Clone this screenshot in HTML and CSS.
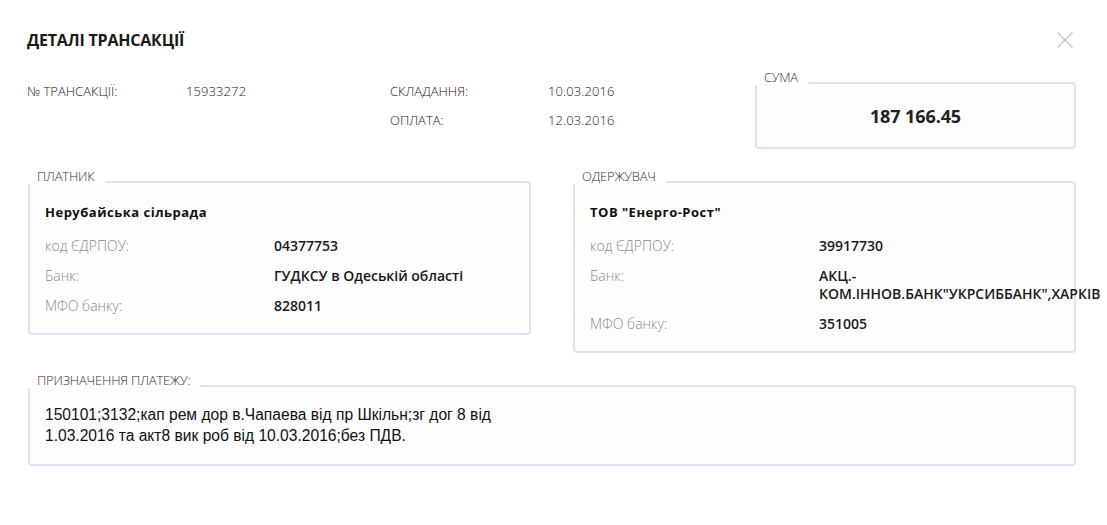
FILE: index.html
```html
<!DOCTYPE html>
<html lang="uk">
<head>
    <meta charset="UTF-8">
    <title>Деталі трансакції</title>
    <link rel="stylesheet" href="styles.css">
</head>
<body>
    <div class="modal">
        <div class="header">
            <h1>ДЕТАЛІ ТРАНСАКЦІЇ</h1>
            <button class="close" aria-label="Закрити">
                <svg width="16" height="16" viewBox="0 0 16 16">
                    <path d="M0.5 0.5 L15.5 15.5 M15.5 0.5 L0.5 15.5" stroke="#c9c9c9" stroke-width="1.4" fill="none"/>
                </svg>
            </button>
        </div>

        <div class="info">
            <div class="meta">
                <span class="meta-label">№ ТРАНСАКЦІЇ:</span>
                <span class="meta-value">15933272</span>
                <span class="meta-label">СКЛАДАННЯ:</span>
                <span class="meta-value">10.03.2016</span>
                <span></span>
                <span></span>
                <span class="meta-label">ОПЛАТА:</span>
                <span class="meta-value">12.03.2016</span>
            </div>
            <div class="box sum">
                <span class="legend">СУМА</span>
                <span class="amount">187 166.45</span>
            </div>
        </div>

        <div class="parties">
            <div class="box party">
                <span class="legend">ПЛАТНИК</span>
                <div class="party-name">Нерубайська сільрада</div>
                <div class="row"><span class="key">код ЄДРПОУ:</span><span class="val">04377753</span></div>
                <div class="row"><span class="key">Банк:</span><span class="val">ГУДКСУ в Одеській області</span></div>
                <div class="row"><span class="key">МФО банку:</span><span class="val">828011</span></div>
            </div>
            <div class="box party">
                <span class="legend">ОДЕРЖУВАЧ</span>
                <div class="party-name">ТОВ "Енерго-Рост"</div>
                <div class="row"><span class="key">код ЄДРПОУ:</span><span class="val">39917730</span></div>
                <div class="row"><span class="key">Банк:</span><span class="val">АКЦ.-КОМ.ІННОВ.БАНК"УКРСИББАНК",ХАРКІВ</span></div>
                <div class="row"><span class="key">МФО банку:</span><span class="val">351005</span></div>
            </div>
        </div>

        <div class="box purpose">
            <span class="legend">ПРИЗНАЧЕННЯ ПЛАТЕЖУ:</span>
            <p>150101;3132;кап рем дор в.Чапаева від пр Шкільн;зг дог 8 від 1.03.2016 та акт8 вик роб від 10.03.2016;без ПДВ.</p>
        </div>
    </div>
</body>
</html>
```

FILE: styles.css
```css
body{
    margin: 0;
    background-color: white;
    font-family: "Open Sans", "Liberation Sans", sans-serif;
    color: #222;
}

.modal{
    width: 1048px;
    padding: 30px 0 0 28px;
}

.header{
    display: flex;
    justify-content: space-between;
    align-items: center;
    height: 20px;
}

h1{
    margin: 0 0 0 -1px;
    font-size: 16px;
    font-weight: 700;
    line-height: 20px;
    letter-spacing: -0.2px;
    color: #1a1a1a;
}

.close{
    border: none;
    background: none;
    padding: 0;
    margin-right: 3px;
    width: 16px;
    height: 16px;
    display: flex;
}

.info{
    display: flex;
    justify-content: space-between;
    align-items: flex-start;
    margin-top: 32px;
}

.meta{
    display: grid;
    grid-template-columns: 159px 204px 158px 150px;
    row-gap: 11px;
    margin-left: -1px;
    font-size: 13px;
    line-height: 18px;
    font-weight: 300;
    color: #222;
}

.meta-value{
    letter-spacing: 0.1px;
}

.box{
    position: relative;
    border: 2px solid #e0e3ef;
    border-radius: 4px;
    background-color: #fdfdfe;
    box-sizing: border-box;
}

.legend{
    position: absolute;
    top: -14px;
    left: -2px;
    padding: 0 10px 0 9px;
    background-color: white;
    font-size: 13px;
    line-height: 15px;
    font-weight: 300;
    color: #333;
    letter-spacing: -0.2px;
    white-space: nowrap;
}

.sum{
    width: 321px;
    height: 67px;
    display: flex;
    align-items: center;
    justify-content: center;
}

.amount{
    font-size: 18px;
    font-weight: 700;
    color: #222;
    letter-spacing: -0.1px;
}

.parties{
    display: flex;
    align-items: flex-start;
    justify-content: space-between;
    margin-top: 32px;
}

.party{
    width: 503px;
    padding: 20px 15px 18px 15px;
}

.party-name{
    font-size: 13px;
    font-weight: 700;
    line-height: 18px;
    letter-spacing: 0.5px;
    color: #111;
    margin-bottom: 16px;
}

.row{
    display: flex;
    font-size: 14px;
    line-height: 18px;
}

.row + .row{
    margin-top: 12px;
}

.key{
    width: 229px;
    flex-shrink: 0;
    font-weight: 300;
    color: #8a8a8a;
}

.val{
    font-weight: 600;
    color: #1a1a1a;
    width: 240px;
    overflow-wrap: normal;
}

.purpose{
    margin-top: 32px;
    padding: 17px 15px 18px 15px;
}

.purpose p{
    margin: 0;
    max-width: 470px;
    font-family: "Liberation Sans", Arial, sans-serif;
    font-size: 15.6px;
    line-height: 21px;
    color: #111;
}
```
